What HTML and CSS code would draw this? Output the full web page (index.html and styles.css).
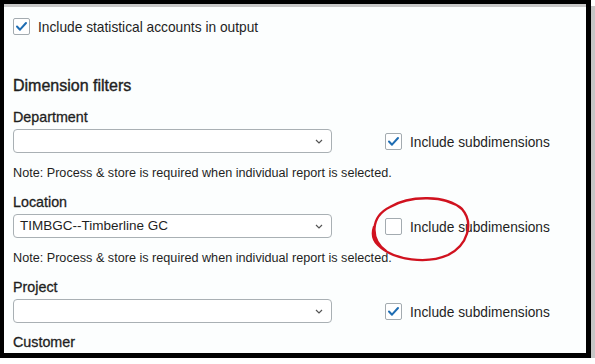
FILE: index.html
```html
<!DOCTYPE html>
<html lang="en">
  <head>
    <meta charset="UTF-8" />
    <meta name="viewport" content="width=device-width, initial-scale=1.0" />
    <title>Dimension filters</title>
    <link rel="stylesheet" href="styles.css">
  </head>
  <body>
    <div class="frame">
      <div class="panel">
        <label class="check-row">
          <span class="cb checked">
            <svg width="15" height="15" viewBox="0 0 15 15"><path d="M3 7.5l3 3.2 6-6.7" /></svg>
          </span>
          <span class="check-text">Include statistical accounts in output</span>
        </label>

        <h2 class="section-title">Dimension filters</h2>

        <div class="field">
          <div class="field-label">Department</div>
          <div class="field-row">
            <div class="select">
              <span class="select-value"></span>
              <svg class="chevron" width="8" height="5" viewBox="0 0 8 5"><path d="M1 1l3 3 3-3" /></svg>
            </div>
            <label class="check-row inline">
              <span class="cb checked">
                <svg width="15" height="15" viewBox="0 0 15 15"><path d="M3 7.5l3 3.2 6-6.7" /></svg>
              </span>
              <span class="check-text">Include subdimensions</span>
            </label>
          </div>
          <p class="note">Note: Process &amp; store is required when individual report is selected.</p>
        </div>

        <div class="field">
          <div class="field-label">Location</div>
          <div class="field-row">
            <div class="select">
              <span class="select-value">TIMBGC--Timberline GC</span>
              <svg class="chevron" width="8" height="5" viewBox="0 0 8 5"><path d="M1 1l3 3 3-3" /></svg>
            </div>
            <label class="check-row inline">
              <span class="cb"></span>
              <span class="check-text">Include subdimensions</span>
            </label>
          </div>
          <p class="note">Note: Process &amp; store is required when individual report is selected.</p>
        </div>

        <div class="field">
          <div class="field-label">Project</div>
          <div class="field-row">
            <div class="select">
              <span class="select-value"></span>
              <svg class="chevron" width="8" height="5" viewBox="0 0 8 5"><path d="M1 1l3 3 3-3" /></svg>
            </div>
            <label class="check-row inline">
              <span class="cb checked">
                <svg width="15" height="15" viewBox="0 0 15 15"><path d="M3 7.5l3 3.2 6-6.7" /></svg>
              </span>
              <span class="check-text">Include subdimensions</span>
            </label>
          </div>
        </div>

        <div class="field last">
          <div class="field-label">Customer</div>
        </div>
      </div>

      <!-- red hand-drawn annotation -->
      <svg class="annotation" width="110" height="76" viewBox="0 0 110 76">
        <path d="M20 58 C4 46 4 24 24 14 C44 2 80 2 96 16 C108 30 102 52 82 62 C62 71 28 68 12 52 C6 46 6 40 8 34" />
      </svg>
    </div>
  </body>
</html>
```

FILE: styles.css
```css
body {
  margin: 0;
  padding: 0;
  background-color: #ffffff;
  font-family: "Liberation Sans", Arial, sans-serif;
  color: #1f1f1f;
}
.frame {
  position: relative;
  width: 591px;
  height: 358px;
  box-sizing: border-box;
  border: 4px solid #000;
  border-right-width: 5px;
  border-bottom-width: 5px;
  background-color: #fcfefe;
  box-shadow: inset 0 3px 0 #c8c8c8, 4px 6px 0 #c6c6c6;
  overflow: hidden;
}
.panel {
  padding: 14px 0 0 9px;
}
.check-row {
  display: flex;
  align-items: center;
  gap: 8px;
  height: 17px;
}
.check-row.inline {
  margin-left: 53px;
}
.cb {
  width: 17px;
  height: 17px;
  box-sizing: border-box;
  border: 1px solid #a3abb0;
  border-radius: 2px;
  background-color: #fff;
  display: flex;
  align-items: center;
  justify-content: center;
}
.cb svg path {
  fill: none;
  stroke: #1e6db3;
  stroke-width: 2;
  stroke-linecap: round;
  stroke-linejoin: round;
}
.check-text {
  font-size: 13.75px;
  line-height: 17px;
  padding-top: 2px;
}
.section-title {
  margin: 41px 0 0;
  font-size: 16px;
  line-height: 20px;
  font-weight: normal;
  -webkit-text-stroke: 0.4px #1f1f1f;
}
.field {
  margin-top: 13px;
}
.field.last {
  margin-top: 11px;
}
.field-label {
  font-size: 14.3px;
  line-height: 17px;
  -webkit-text-stroke: 0.3px #1f1f1f;
}
.field-row {
  display: flex;
  align-items: center;
  margin-top: 3px;
}
.select {
  width: 319px;
  height: 24px;
  box-sizing: border-box;
  border: 1px solid #a9b0b4;
  border-radius: 4px;
  background-color: #fff;
  display: flex;
  align-items: center;
  justify-content: space-between;
  padding: 0 8px 0 6px;
}
.select-value {
  font-size: 13.5px;
  line-height: 16px;
}
.chevron path {
  fill: none;
  stroke: #555;
  stroke-width: 1.2;
}
.note {
  margin: 12px 0 0;
  font-size: 12.65px;
  line-height: 16px;
}
.annotation {
  position: absolute;
  left: 362px;
  top: 189px;
}
.annotation path {
  fill: none;
  stroke: #d0121f;
  stroke-width: 2.4;
  stroke-linecap: round;
}
```
